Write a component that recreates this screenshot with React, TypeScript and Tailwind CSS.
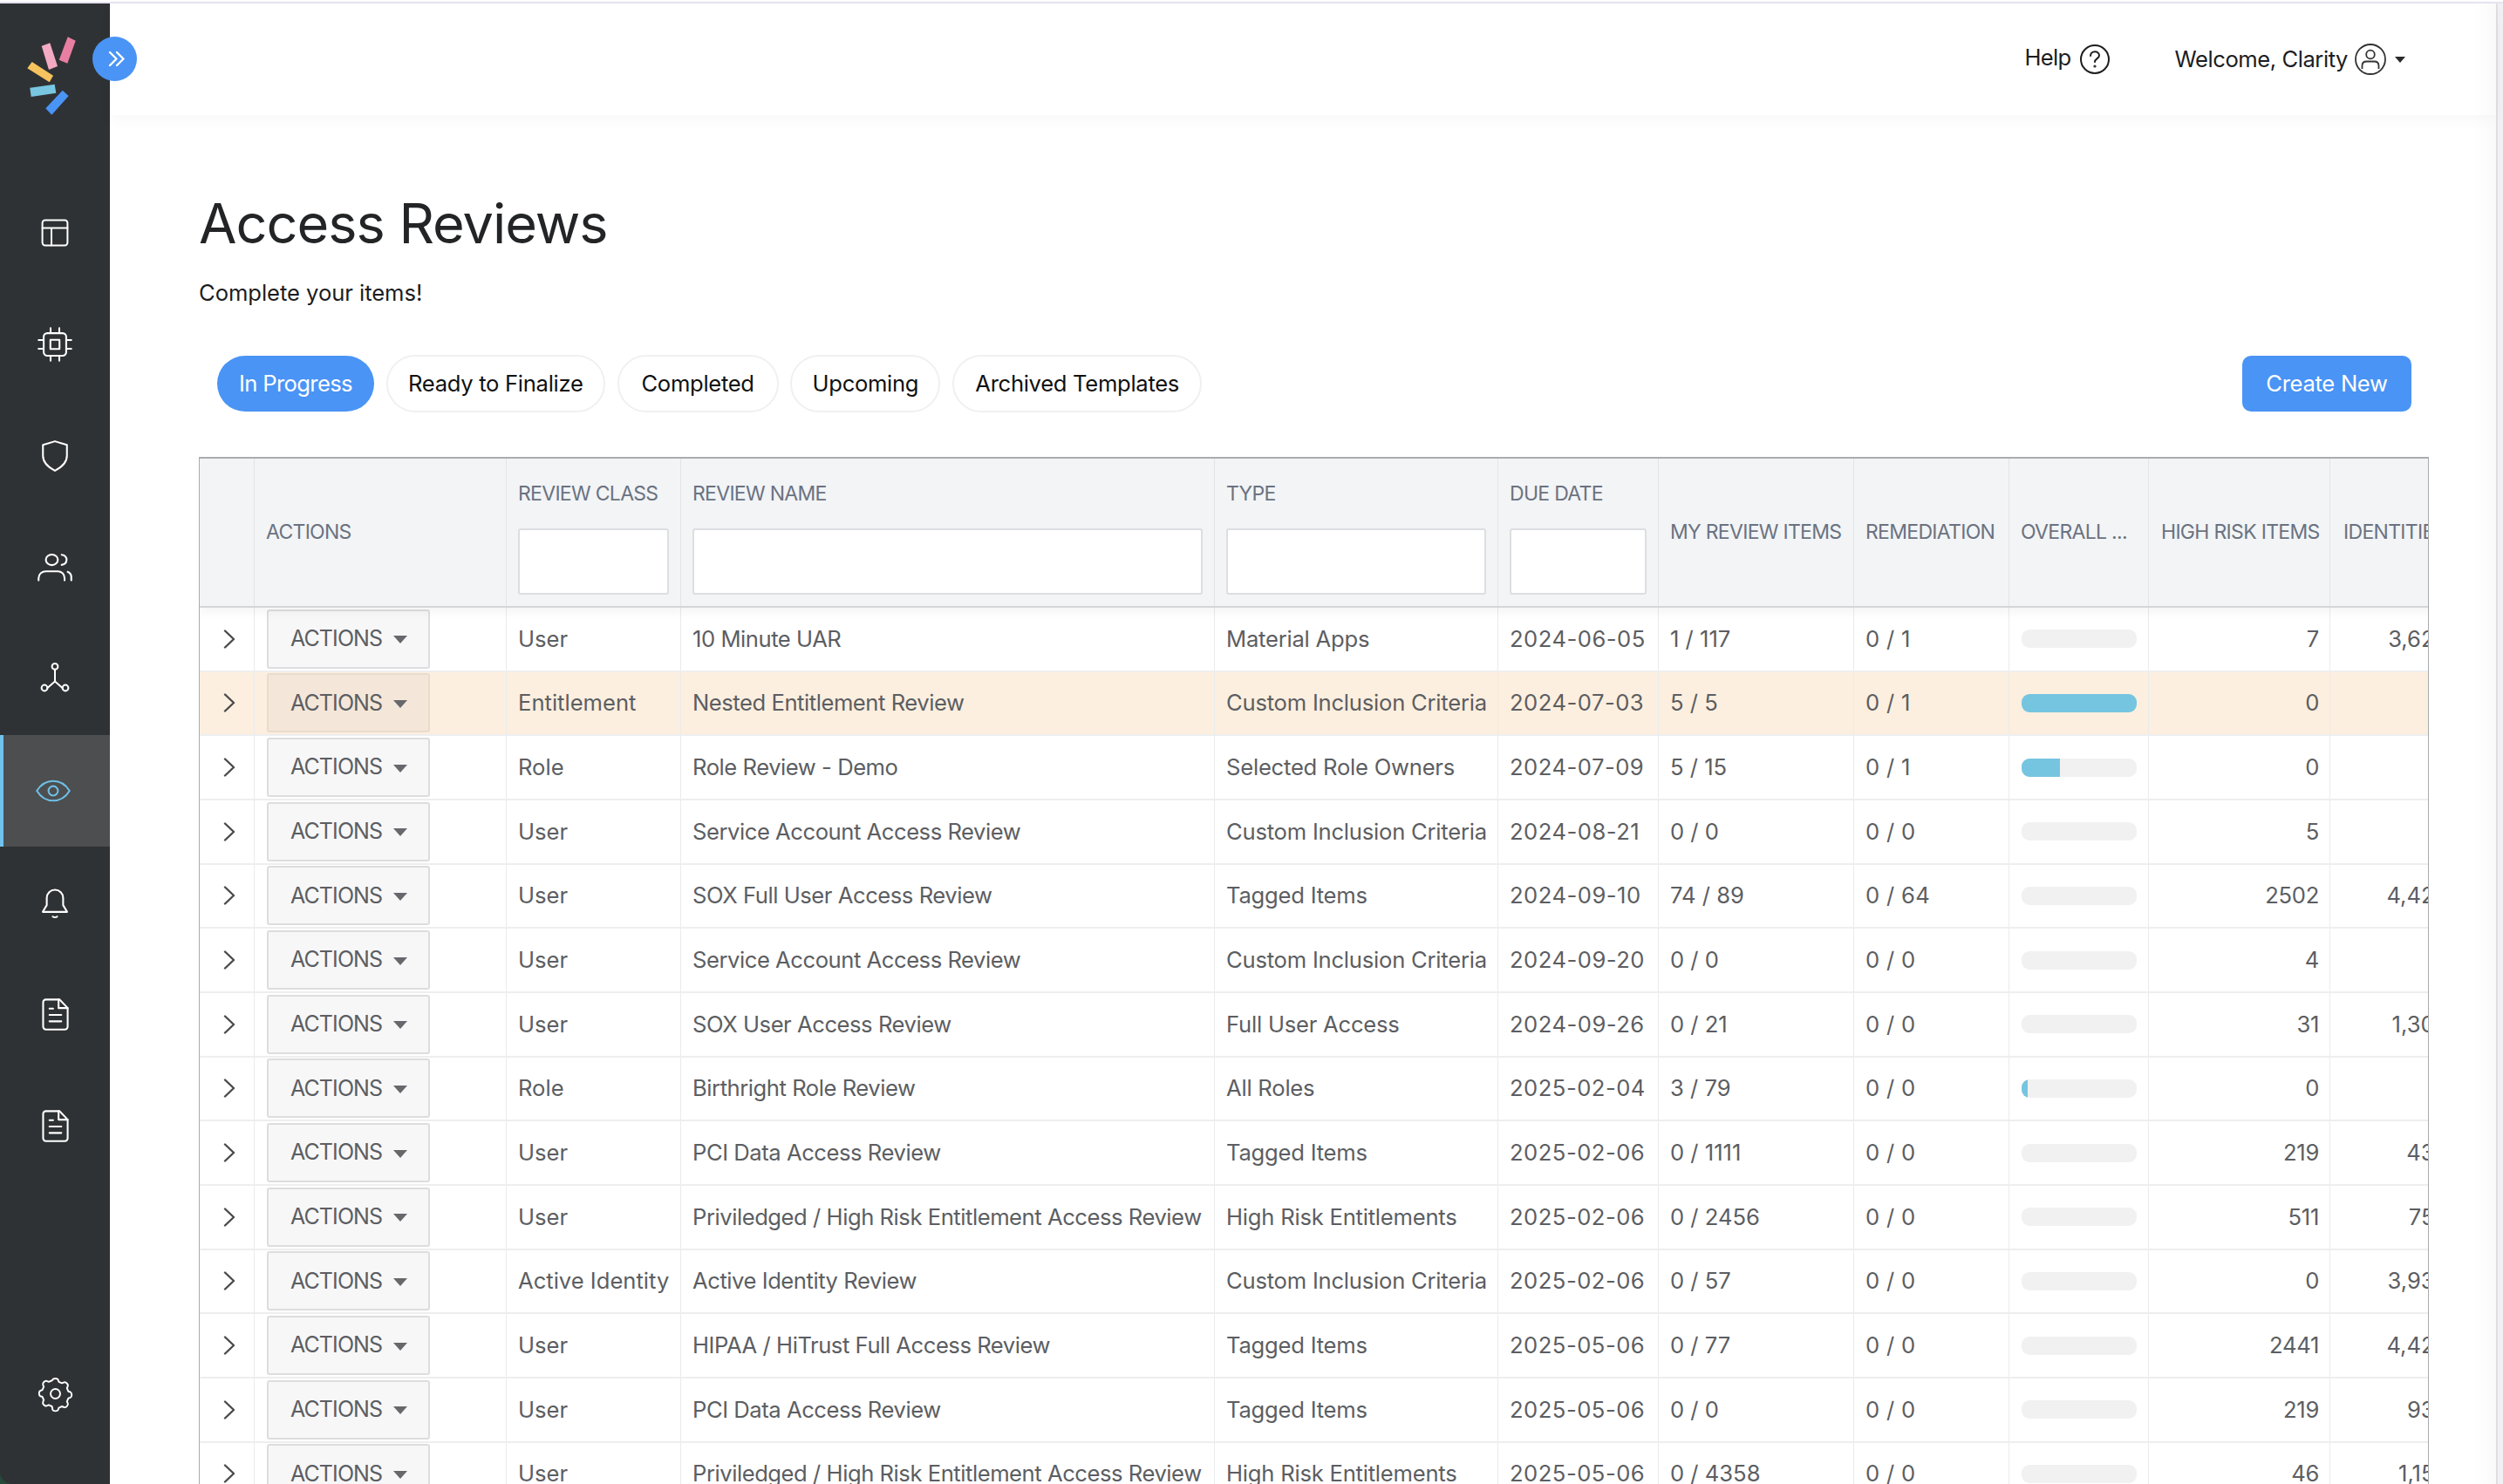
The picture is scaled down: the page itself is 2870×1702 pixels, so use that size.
import React from "react";

const GRID = "grid grid-cols-[63px_289px_200px_612px_325px_184px_224px_178px_160px_208px_145px]";

type Row = { cls: string; name: string; type: string; due: string; mine: string; rem: string; pct: number; risk: string; ids: string };

const rows: Row[] = [
  { cls: "User", name: "10 Minute UAR", type: "Material Apps", due: "2024-06-05", mine: "1 / 117", rem: "0 / 1", pct: 0, risk: "7", ids: "3,621" },
  { cls: "Entitlement", name: "Nested Entitlement Review", type: "Custom Inclusion Criteria", due: "2024-07-03", mine: "5 / 5", rem: "0 / 1", pct: 100, risk: "0", ids: "" },
  { cls: "Role", name: "Role Review - Demo", type: "Selected Role Owners", due: "2024-07-09", mine: "5 / 15", rem: "0 / 1", pct: 33, risk: "0", ids: "" },
  { cls: "User", name: "Service Account Access Review", type: "Custom Inclusion Criteria", due: "2024-08-21", mine: "0 / 0", rem: "0 / 0", pct: 0, risk: "5", ids: "" },
  { cls: "User", name: "SOX Full User Access Review", type: "Tagged Items", due: "2024-09-10", mine: "74 / 89", rem: "0 / 64", pct: 0, risk: "2502", ids: "4,421" },
  { cls: "User", name: "Service Account Access Review", type: "Custom Inclusion Criteria", due: "2024-09-20", mine: "0 / 0", rem: "0 / 0", pct: 0, risk: "4", ids: "" },
  { cls: "User", name: "SOX User Access Review", type: "Full User Access", due: "2024-09-26", mine: "0 / 21", rem: "0 / 0", pct: 0, risk: "31", ids: "1,301" },
  { cls: "Role", name: "Birthright Role Review", type: "All Roles", due: "2025-02-04", mine: "3 / 79", rem: "0 / 0", pct: 5, risk: "0", ids: "" },
  { cls: "User", name: "PCI Data Access Review", type: "Tagged Items", due: "2025-02-06", mine: "0 / 1111", rem: "0 / 0", pct: 0, risk: "219", ids: "431" },
  { cls: "User", name: "Priviledged / High Risk Entitlement Access Review", type: "High Risk Entitlements", due: "2025-02-06", mine: "0 / 2456", rem: "0 / 0", pct: 0, risk: "511", ids: "751" },
  { cls: "Active Identity", name: "Active Identity Review", type: "Custom Inclusion Criteria", due: "2025-02-06", mine: "0 / 57", rem: "0 / 0", pct: 0, risk: "0", ids: "3,931" },
  { cls: "User", name: "HIPAA / HiTrust Full Access Review", type: "Tagged Items", due: "2025-05-06", mine: "0 / 77", rem: "0 / 0", pct: 0, risk: "2441", ids: "4,421" },
  { cls: "User", name: "PCI Data Access Review", type: "Tagged Items", due: "2025-05-06", mine: "0 / 0", rem: "0 / 0", pct: 0, risk: "219", ids: "931" },
  { cls: "User", name: "Priviledged / High Risk Entitlement Access Review", type: "High Risk Entitlements", due: "2025-05-06", mine: "0 / 4358", rem: "0 / 0", pct: 0, risk: "46", ids: "1,151" },
];

const Icon = ({ children, size = 50 }: { children: React.ReactNode; size?: number }) => (
  <svg width={size} height={size} viewBox="0 0 24 24" fill="none" stroke="currentColor" strokeWidth="1" strokeLinecap="round" strokeLinejoin="round">
    {children}
  </svg>
);

const LayoutIcon = () => (
  <Icon size={48}><rect x="4.800" y="4.800" width="14.400" height="14.400" rx="1.600" /><path d="M4.800 9.300h14.400M10 9.300v9.900" /></Icon>
);
const ChipIcon = () => (
  <Icon><rect x="5.800" y="5.800" width="12.400" height="12.400" rx="2" /><rect x="9.500" y="9.500" width="5" height="5" /><path d="M9.600 3v2.800M14.400 3v2.800M9.600 18.200V21M14.400 18.200V21M3 9.600h2.800M3 14.400h2.800M18.200 9.600H21M18.200 14.400H21" /></Icon>
);
const ShieldIcon = () => (
  <Icon><path d="M12 3.900l6.600 2v6c0 3.800-2.900 6.300-6.600 8.200-3.700-1.900-6.600-4.400-6.600-8.200v-6z" /></Icon>
);
const UsersIcon = () => (
  <Icon><ellipse cx="10.300" cy="7.700" rx="3.300" ry="2.900" /><path d="M3 19v-1.200c0-2.400 2-3.800 4-3.800h6.500c2 0 3.800 1.400 3.800 3.800V19" /><path d="M15.700 4.900c1.700.3 2.700 1.500 2.700 2.800s-1 2.500-2.700 2.800" /><path d="M19 14.300c1.200.5 2 1.500 2 3V19" /></Icon>
);
const NetworkIcon = () => (
  <Icon size={48}><circle cx="12" cy="4.700" r="1.700" /><circle cx="6" cy="17" r="1.700" /><circle cx="18" cy="17" r="1.700" /><path d="M12 6.400v6.800M7.700 17l4.300-3.800 4.300 3.800" /></Icon>
);
const EyeIcon = () => (
  <Icon><path d="M3 12c2.200-3.600 5.400-5.400 9-5.400s6.800 1.800 9 5.400c-2.200 3.600-5.400 5.400-9 5.400S5.200 15.600 3 12z" /><circle cx="12" cy="12" r="2.600" /></Icon>
);
const BellIcon = () => (
  <Icon><path d="M7.500 13.500v-4a4.500 4.500 0 0 1 9 0v4l2.200 3.700H5.300z" /><path d="M10.800 19.800c.6.500 1.800.5 2.400 0" /></Icon>
);
const DocIcon = () => (
  <Icon><path d="M7 4h7.500l4.500 4.700V19a1.500 1.500 0 0 1-1.500 1.500h-10.500A1.500 1.500 0 0 1 5.500 19V5.500A1.500 1.500 0 0 1 7 4z" /><path d="M14 4v4.700h5" /><path d="M9 9h2M9 12.500h6.500M9 16h6.500" /></Icon>
);
const GearIcon = () => (
  <Icon size={47}><circle cx="12" cy="12" r="2.800" /><path d="M10.400 3.800c.4-1 2.800-1 3.200 0l.4 1.200 1.900.8 1.200-.5c1-.4 2.600 1.200 2.200 2.200l-.5 1.200.8 1.900 1.200.4c1 .4 1 2.800 0 3.200l-1.200.4-.8 1.900.5 1.200c.4 1-1.200 2.600-2.200 2.200l-1.200-.5-1.900.8-.4 1.200c-.4 1-2.800 1-3.200 0L10 19.400l-1.900-.8-1.200.5c-1 .4-2.600-1.200-2.200-2.200l.5-1.200-.8-1.900-1.200-.4c-1-.4-1-2.800 0-3.200l1.200-.4.8-1.900-.5-1.200c-.4-1 1.200-2.600 2.200-2.200l1.200.5 1.900-.8z" /></Icon>
);

const nav = [LayoutIcon, ChipIcon, ShieldIcon, UsersIcon, NetworkIcon, EyeIcon, BellIcon, DocIcon, DocIcon];

const Logo = () => (
  <svg width="60" height="94" viewBox="0 0 60 94">
    <polygon points="47.700,2.300 56.700,6.700 47.300,32.700 37.700,28.700" fill="#e87fa2" />
    <polygon points="17.700,12.700 27.300,9.300 36,36 26,40" fill="#f3aac3" />
    <polygon points="6.700,31 31,46.700 26.700,54.300 1.300,38.300" fill="#f6c35f" />
    <polygon points="4.300,60.700 32.700,56.700 34.300,66.700 5.700,71" fill="#78c6e2" />
    <polygon points="41.700,63.700 48.700,70 29.300,91.700 22.300,84.300" fill="#4a94f5" />
  </svg>
);

const Pill = ({ label, width, active = false }: { label: string; width: string; active?: boolean }) => (
  <div
    className={`flex items-center justify-center ${width} ${
      active
        ? "h-[64px] rounded-[32px] bg-[#4a94f5] tracking-[-0.650px] text-[#ffffff]"
        : "h-[66px] rounded-[33px] border-2 border-[#f0f0f0] bg-white text-[#111111]"
    }`}
  >
    {label}
  </div>
);

const Filter = () => <div className="mt-[22.500px] h-[76px] rounded-[3px] border-2 border-[#dcdee1] bg-white" />;

const Chevron = () => (
  <svg width="14" height="22" viewBox="0 0 14 22" fill="none" stroke="#4a4a4a" strokeWidth="2.400" strokeLinecap="round" strokeLinejoin="round">
    <path d="M2 1.500l10 9.500-10 9.500" />
  </svg>
);

const HeadLabel = ({ label, filter = false, pl = "pl-[13px]" }: { label: string; filter?: boolean; pl?: string }) => (
  <div className={filter ? `overflow-hidden border-r border-[#e2e4e7] ${pl} pr-[13px] pt-[23px]` : `flex items-center overflow-hidden border-r border-[#e2e4e7] ${pl} pr-[6px]`}>
    <div className="whitespace-nowrap">{label}</div>
    {filter && <Filter />}
  </div>
);

const cell = "flex items-center overflow-hidden whitespace-nowrap border-r border-[#eaebec] pl-[13px]";

export default function App() {
  return (
    <div className="relative flex h-[1702px] w-[2870px] flex-col overflow-hidden bg-white font-['Inter','Liberation_Sans',sans-serif] text-[25.600px] tracking-[-0.300px]">
      <div className="h-[4px] border-b-2 border-[#e6e3f2] bg-white" />
      <div className="flex min-h-0 flex-1">
        <div className="w-[126px] shrink-0 bg-[#27493a]">
          <aside className="flex h-full flex-col rounded-bl-[14px] bg-[#2f3234] text-white">
            <div className="flex h-[199px] items-start pl-[30px] pt-[36px]">
              <Logo />
            </div>
            {nav.map((I, i) =>
              i === 5 ? (
                <div key={i} className="flex h-[128px] items-center justify-center border-l-4 border-[#6fc3ec] bg-[#4c4e50] pr-[8px] text-[#6fbfe6]">
                  <I />
                </div>
              ) : (
                <div key={i} className="flex h-[128px] items-center justify-center">
                  <I />
                </div>
              ),
            )}
            <div className="mt-auto flex h-[127px] items-start justify-center">
              <GearIcon />
            </div>
          </aside>
        </div>

        <div className="relative min-w-0 flex-1 shadow-[inset_-26px_0_26px_-18px_rgba(0,0,0,0.03)]">
          <header className="flex h-[128px] items-center justify-end pr-[104px] text-[#1d1d1f] shadow-[0_6px_16px_rgba(0,0,0,0.03)]">
            <span className="-mt-[4px] tracking-[-0.700px]">Help</span>
            <svg className="ml-[9px]" width="36" height="36" viewBox="0 0 36 36" fill="none" stroke="#1d1d1f" strokeWidth="2" strokeLinecap="round">
              <circle cx="18" cy="18" r="16" />
              <path d="M13 14c0-3 2.300-4.800 5-4.800s5 1.800 5 4.500c0 3.300-5 3.600-5 7.300" />
              <circle cx="18" cy="26" r=".6" />
            </svg>
            <span className="ml-[74px] tracking-[-0.450px]">Welcome, Clarity</span>
            <svg className="ml-[8px]" width="36" height="36" viewBox="0 0 36 36" fill="none" stroke="#333333" strokeWidth="1.800">
              <circle cx="18" cy="18" r="17" />
              <circle cx="18" cy="12.500" r="4.800" />
              <path d="M8.500 29v-3.500c0-3 2-5 5-5h9c3 0 5 2 5 5V29" />
            </svg>
            <span className="ml-[10px] h-0 w-0 border-x-[6.500px] border-t-[7px] border-x-transparent border-t-[#2a2a2a]" />
          </header>

          <svg className="absolute left-[-20px] top-[37.500px]" width="51" height="51" viewBox="0 0 51 51" fill="none" stroke="white" strokeWidth="2.400" strokeLinecap="round" strokeLinejoin="round">
            <circle cx="25.500" cy="25.500" r="25.500" fill="#4a94f5" stroke="none" />
            <path d="M20 18l7.500 7.500-7.500 7.500M28 18l7.500 7.500-7.500 7.500" />
          </svg>

          <main className="pl-[102px] pr-[77px]">
            <h1 className="pt-[84px] text-[63px] font-normal leading-[80px] tracking-[-1px] text-[#222426]">Access Reviews</h1>
            <p className="mt-[22px] leading-[36px] tracking-[-0.050px] text-[#1d1d1f]">Complete your items!</p>

            <div className="mt-[53px] flex items-center justify-between pl-[21px] pr-[20px]">
              <div className="flex items-center gap-[13.800px]">
                <Pill label="In Progress" width="w-[180px]" active />
                <Pill label="Ready to Finalize" width="w-[251px]" />
                <Pill label="Completed" width="w-[185px]" />
                <Pill label="Upcoming" width="w-[172px]" />
                <Pill label="Archived Templates" width="w-[286px]" />
              </div>
              <div className="flex h-[64px] w-[194px] items-center justify-center rounded-[10px] bg-[#4a94f5] text-white">Create New</div>
            </div>

            <div className="mt-[51px] h-[1200px] overflow-hidden border-x border-t-2 border-[#a9acb0] text-[#5c5e62]">
              <div className={`${GRID} relative z-10 h-[171px] w-[2588px] border-b-2 border-[#d4d6d9] bg-[#f2f4f6] text-[23px] uppercase tracking-[-0.700px] text-[#6b7280] shadow-[0_6px_10px_rgba(0,0,0,0.04)]`}>
                <div className="border-r border-[#e2e4e7]" />
                <HeadLabel label="Actions" />
                <HeadLabel label="Review Class" filter />
                <HeadLabel label="Review Name" filter />
                <HeadLabel label="Type" filter />
                <HeadLabel label="Due Date" filter />
                <HeadLabel label="My Review Items" />
                <HeadLabel label="Remediation" />
                <HeadLabel label="Overall ..." />
                <HeadLabel label="High Risk Items" pl="pl-[14px]" />
                <HeadLabel label="Identities" pl="pl-[15px]" />
              </div>
              {rows.map((r, i) => (
                <div key={i} className={`${GRID} h-[73.670px] w-[2588px] border-b-2 border-[#eeeeef] ${i === 1 ? "bg-[#fcefdf]" : "bg-white"}`}>
                  <div className="flex items-center justify-center border-r border-[#eaebec] pl-[5px]">
                    <Chevron />
                  </div>
                  <div className="flex items-center border-r border-[#eaebec] pl-[14px]">
                    <div className={`flex h-[68px] w-[187px] items-center rounded-[3px] border-2 pl-[25px] text-[25px] tracking-[-0.900px] ${i === 1 ? "border-[#e9dccd] bg-[#f4e7d9]" : "border-[#dddddf] bg-[#f7f7f8]"}`}>
                      <span>ACTIONS</span>
                      <span className="ml-[13px] mt-[2px] h-0 w-0 border-x-[8px] border-t-[9px] border-x-transparent border-t-[#66686c]" />
                    </div>
                  </div>
                  <div className={`${cell} tracking-normal`}>{r.cls}</div>
                  <div className={`${cell} tracking-[-0.450px]`}>{r.name}</div>
                  <div className={`${cell} tracking-[-0.220px]`}>{r.type}</div>
                  <div className={`${cell} tracking-[0.500px]`}>{r.due}</div>
                  <div className={`${cell} tracking-normal`}>{r.mine}</div>
                  <div className={`${cell} tracking-[0.300px]`}>{r.rem}</div>
                  <div className={cell}>
                    <div className="ml-[1px] h-[21px] w-[132px] overflow-hidden rounded-[9px] bg-[#f1f1f1]">
                      <div className="h-full bg-[#76c5e0]" style={{ width: `${r.pct}%` }} />
                    </div>
                  </div>
                  <div className={`${cell} justify-end pr-[12px]`}>{r.risk}</div>
                  <div className={`${cell} justify-end pr-[14px] tracking-normal`}>{r.ids}</div>
                </div>
              ))}
            </div>
          </main>
        </div>
        <div className="w-[8px] shrink-0 border-l-2 border-[#e0e0e2] bg-[#f1f1f3]" />
      </div>
    </div>
  );
}
